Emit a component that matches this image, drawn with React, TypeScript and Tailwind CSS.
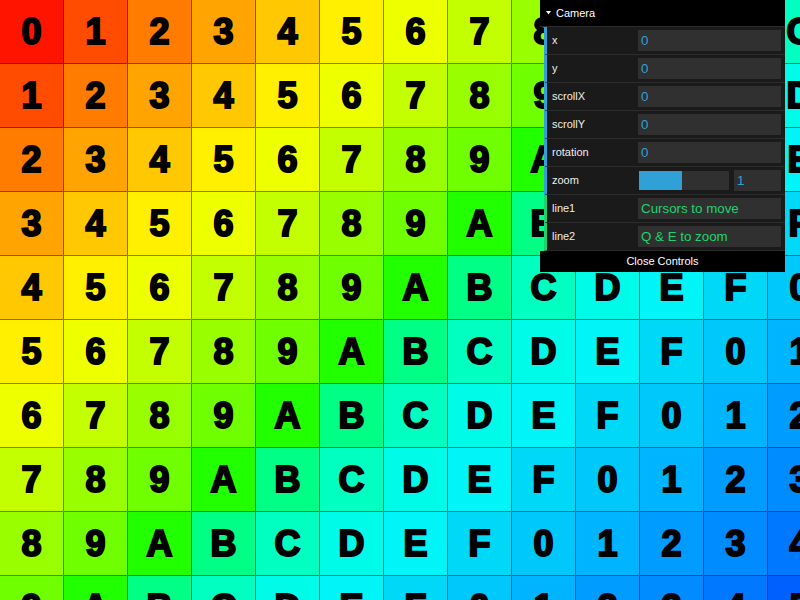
import React from 'react';

// colour of a cell depends only on (col + row)
const COLORS = [
  '#ff1400', '#ff4c00', '#ff7c00', '#ffa400', '#ffc800', '#fff000',
  '#eeff00', '#c4ff00', '#99ff00', '#70ff00', '#22ff00', '#00ff84',
  '#00ffc0', '#00fce8', '#00f4f8', '#00d8f8', '#00c8fa', '#00b4ff',
  '#009cff', '#008cff', '#0078ff', '#0060ff',
];

const HEX = '0123456789ABCDEF';
const COLS = 13;
const ROWS = 10;

const Grid = () => (
  <div className="flex flex-col">
    {Array.from({ length: ROWS }).map((_, r) => (
      <div key={r} className="flex">
        {Array.from({ length: COLS }).map((_, c) => (
          <div
            key={c}
            style={{ backgroundColor: COLORS[r + c] }}
            className="w-[64px] h-[64px] shrink-0 flex items-center justify-center border-r border-b border-[rgba(0,0,0,0.45)] font-['Liberation_Sans',Arial,sans-serif] font-bold text-[36px] leading-none text-black [-webkit-text-stroke:2px_black]"
          >
            {HEX[(r + c) % 16]}
          </div>
        ))}
      </div>
    ))}
  </div>
);

type Row =
  | { kind: 'number'; label: string; value: string }
  | { kind: 'slider'; label: string; value: string; pct: number }
  | { kind: 'text'; label: string; value: string };

const ROWS_GUI: Row[] = [
  { kind: 'number', label: 'x', value: '0' },
  { kind: 'number', label: 'y', value: '0' },
  { kind: 'number', label: 'scrollX', value: '0' },
  { kind: 'number', label: 'scrollY', value: '0' },
  { kind: 'number', label: 'rotation', value: '0' },
  { kind: 'slider', label: 'zoom', value: '1', pct: 48 },
  { kind: 'text', label: 'line1', value: 'Cursors to move' },
  { kind: 'text', label: 'line2', value: 'Q & E to zoom' },
];

const GuiRow = ({ row }: { row: Row }) => {
  const stripe = row.kind === 'text' ? 'border-l-[#1ed36f]' : 'border-l-[#2fa1d6]';
  const valueColor = row.kind === 'text' ? 'text-[#1ed36f]' : 'text-[#2fa1d6]';
  return (
    <div className={`h-[28px] flex items-center bg-[#1a1a1a] border-l-[3px] ${stripe} border-b border-b-[#2c2c2c] pl-[5px] pr-[4px]`}>
      <span className="w-[86px] shrink-0 text-[11px] text-[#eeeeee]">{row.label}</span>
      {row.kind === 'slider' ? (
        <div className="flex-1 flex items-center h-[21px]">
          <div className="ml-[1px] w-[90px] h-[19px] bg-[#303030]">
            <div className="h-full bg-[#2fa1d6]" style={{ width: `${row.pct}%` }} />
          </div>
          <div className={`ml-[5px] flex-1 h-[21px] bg-[#303030] pl-[3px] flex items-center text-[13.33px] ${valueColor}`}>
            {row.value}
          </div>
        </div>
      ) : (
        <div className={`flex-1 h-[21px] bg-[#303030] pl-[3px] flex items-center text-[13.33px] ${valueColor}`}>
          {row.value}
        </div>
      )}
    </div>
  );
};

const Gui = () => (
  <div className="absolute top-0 right-[15px] w-[245px] font-['Liberation_Sans',Arial,sans-serif]">
    {/* folder title */}
    <div className="h-[27px] bg-black border-b border-[#2c2c2c] flex items-center text-[11px] text-white relative">
      <svg className="absolute left-[6px] top-[11px]" width="5" height="4" viewBox="0 0 5 4">
        <path d="M0 0 L5 0 L2.5 3.5 Z" fill="#ffffff" />
      </svg>
      <span className="pl-[16px]">Camera</span>
    </div>
    <div className="border-l-[4px] border-l-transparent">
      {ROWS_GUI.map((row) => (
        <GuiRow key={row.label} row={row} />
      ))}
    </div>
    <div className="h-[21px] bg-black flex items-center justify-center text-[11px] text-white">
      Close Controls
    </div>
  </div>
);

export default function App() {
  return (
    <div className="relative w-[800px] h-[600px] overflow-hidden bg-black">
      <Grid />
      <Gui />
    </div>
  );
}
